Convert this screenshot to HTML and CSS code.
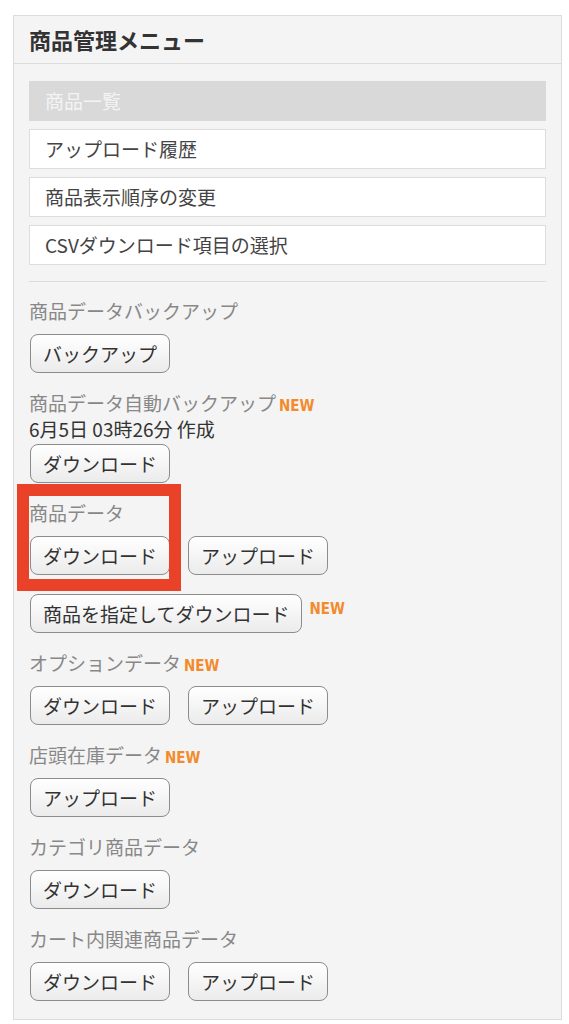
FILE: index.html
```html
<!DOCTYPE html>
<html lang="ja">
<head>
    <meta charset="UTF-8">
    <meta name="viewport" content="width=device-width, initial-scale=1.0">
    <title>商品管理メニュー</title>
    <link rel="stylesheet" href="styles.css">
</head>
<body>
    <div class="panel">
        <h2 class="panel-title">商品管理メニュー</h2>

        <div class="panel-body">
            <ul class="menu">
                <li class="menu-item is-current">商品一覧</li>
                <li class="menu-item">アップロード履歴</li>
                <li class="menu-item">商品表示順序の変更</li>
                <li class="menu-item">CSVダウンロード項目の選択</li>
            </ul>

            <hr class="divider">

            <div class="section first">
                <p class="section-label">商品データバックアップ</p>
                <div class="btn-row">
                    <button type="button" class="btn">バックアップ</button>
                </div>
            </div>

            <div class="section">
                <p class="section-label">商品データ自動バックアップ<span class="new">NEW</span></p>
                <p class="section-note">6月5日 03時26分 作成</p>
                <div class="btn-row tight">
                    <button type="button" class="btn">ダウンロード</button>
                </div>
            </div>

            <div class="section marked">
                <p class="section-label">商品データ</p>
                <div class="btn-row">
                    <button type="button" class="btn">ダウンロード</button>
                    <button type="button" class="btn">アップロード</button>
                </div>
                <div class="btn-row spaced">
                    <button type="button" class="btn">商品を指定してダウンロード</button>
                    <span class="new raised">NEW</span>
                </div>
                <!-- annotation frame -->
                <div class="highlight"></div>
            </div>

            <div class="section">
                <p class="section-label">オプションデータ<span class="new">NEW</span></p>
                <div class="btn-row">
                    <button type="button" class="btn">ダウンロード</button>
                    <button type="button" class="btn">アップロード</button>
                </div>
            </div>

            <div class="section">
                <p class="section-label">店頭在庫データ<span class="new">NEW</span></p>
                <div class="btn-row">
                    <button type="button" class="btn">アップロード</button>
                </div>
            </div>

            <div class="section">
                <p class="section-label">カテゴリ商品データ</p>
                <div class="btn-row">
                    <button type="button" class="btn">ダウンロード</button>
                </div>
            </div>

            <div class="section">
                <p class="section-label">カート内関連商品データ</p>
                <div class="btn-row">
                    <button type="button" class="btn">ダウンロード</button>
                    <button type="button" class="btn">アップロード</button>
                </div>
            </div>
        </div>
    </div>
</body>
</html>
```

FILE: styles.css
```css
/* General Styles */
body {
    margin: 0;
    padding: 0;
    background: #fff;
    color: #333;
    font-family: "Noto Sans CJK JP", "Noto Sans", sans-serif;
}

/* Panel */
.panel {
    margin: 15px 7px 0 13px;
    background: #f4f4f4;
    border: 1px solid #dcdcdc;
}

.panel-title {
    margin: 0;
    height: 47px;
    padding: 0 15px;
    font-size: 22px;
    font-weight: bold;
    line-height: 47px;
    color: #333;
    border-bottom: 1px solid #dcdcdc;
}

.panel-body {
    padding: 17px 15px 18px;
}

/* Menu list */
.menu {
    list-style: none;
    margin: 0;
    padding: 0;
    display: flex;
    flex-direction: column;
    gap: 8px;
}

.menu-item {
    height: 38px;
    padding: 0 15px;
    font-size: 19px;
    line-height: 38px;
    color: #444;
    background: #fff;
    border: 1px solid #dddddd;
}

.menu-item.is-current {
    background: #d9d9d9;
    border-color: #d9d9d9;
    color: #f4f4f4;
}

.divider {
    margin: 16px 0 17px;
    border: 0;
    border-top: 1px solid #dcdcdc;
}

/* Sections */
.section {
    margin-top: 18px;
}

.section.first {
    margin-top: 0;
}

.section.marked {
    position: relative;
}

.section-label {
    height: 24px;
    margin: 0 0 11px;
    font-size: 19px;
    line-height: 24px;
    color: #888;
}

.section-note {
    margin: -9px 0 3px;
    font-size: 19px;
    line-height: 24px;
    color: #333;
}

.new {
    margin-left: 3px;
    font-family: "DejaVu Sans", sans-serif;
    font-stretch: condensed;
    font-size: 15px;
    font-weight: bold;
    line-height: 1;
    color: #f28b2c;
}

.new.raised {
    align-self: flex-start;
    margin-top: 8px;
}

/* Buttons */
.btn-row {
    display: flex;
    align-items: center;
    gap: 17px;
}

.btn-row.spaced {
    margin-top: 19px;
    gap: 4px;
}

.btn {
    height: 39px;
    margin-left: 1px;
    padding: 0 12px;
    font-family: inherit;
    font-size: 19px;
    line-height: 37px;
    color: #333;
    background: linear-gradient(#ffffff, #ebebeb);
    border: 1px solid #8c8c8c;
    border-radius: 8px;
    cursor: pointer;
}

.highlight {
    position: absolute;
    top: -17px;
    left: -12px;
    width: 140px;
    height: 83px;
    border: 12px solid #ea4129;
    pointer-events: none;
}
```
